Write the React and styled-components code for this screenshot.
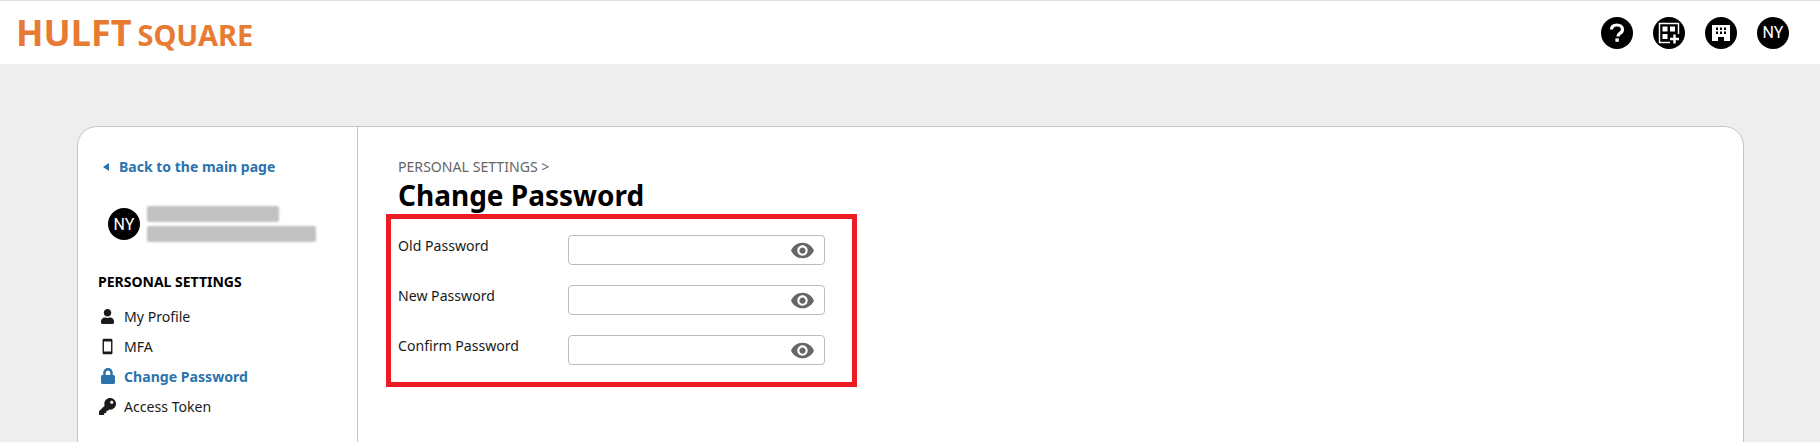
import React from "react";
import styled, { createGlobalStyle } from "styled-components";
import { FaUser, FaLock, FaKey } from "react-icons/fa";
import { MdVisibility, MdSmartphone } from "react-icons/md";

const GlobalStyle = createGlobalStyle`
  html, body {
    margin: 0;
    height: 100%;
    overflow: hidden;
    background: #eeeeee;
    font-family: "Noto Sans", "Open Sans", sans-serif;
  }
`;

const fields = ["Old Password", "New Password", "Confirm Password"];

export default function App() {
  return (
    <Page>
      <GlobalStyle />
      <Header>
        <Logo>
          <LogoMain>HULFT</LogoMain>
          <LogoSub>SQUARE</LogoSub>
        </Logo>
        <HeaderIcons>
          <Circle>
            <svg width="20" height="22" viewBox="0 0 20 22" fill="none">
              <path d="M4.500 7.500C4.500 4.600 6.800 3 10 3s5.500 1.700 5.500 4.400c0 2-1.100 3-2.600 4-1.300.9-1.900 1.500-1.900 3" stroke="#fff" strokeWidth="3.2" />
              <rect x="8.400" y="16.400" width="3.400" height="3.400" fill="#fff" />
            </svg>
          </Circle>
          <Circle>
            <svg width="22" height="22" viewBox="0 0 22 22" fill="none">
              <path d="M12 20.500H1.500v-19h19V12" stroke="#fff" strokeWidth="1.4" />
              <path d="M4.500 4.500h5v5h-5zM12 4.500h5v5h-5zM4.500 12h5v5h-5z" fill="#fff" />
              <path d="M16.500 12.500v9M12 17h9" stroke="#fff" strokeWidth="2.400" />
            </svg>
          </Circle>
          <Circle>
            <svg width="20" height="20" viewBox="0 0 20 20">
              <path
                fillRule="evenodd"
                fill="#fff"
                d="M1 2h18v16h-6v-4H7v4H1zM5 4.500v2.400h2V4.500zM9 4.500v2.400h2V4.500zM13 4.500v2.400h2V4.500zM5 8.500v2.400h2V8.500zM9 8.500v2.400h2V8.500zM13 8.500v2.400h2V8.500z"
              />
            </svg>
          </Circle>
          <Circle>NY</Circle>
        </HeaderIcons>
      </Header>

      <Card>
        <Sidebar>
          <BackLink href="#">
            <BackArrow />
            Back to the main page
          </BackLink>
          <UserRow>
            <Circle>NY</Circle>
            <Blurred>
              <BlurLine $width={132} />
              <BlurLine $width={169} />
            </Blurred>
          </UserRow>
          <SectionTitle>PERSONAL SETTINGS</SectionTitle>
          <NavList>
            <NavItem>
              <NavIcon><FaUser size={15} /></NavIcon>
              My Profile
            </NavItem>
            <NavItem>
              <NavIcon><MdSmartphone size={21} /></NavIcon>
              MFA
            </NavItem>
            <NavItem $active>
              <NavIcon><FaLock size={16} /></NavIcon>
              Change Password
            </NavItem>
            <NavItem>
              <NavIcon><FaKey size={17} /></NavIcon>
              Access Token
            </NavItem>
          </NavList>
        </Sidebar>

        <Content>
          <Crumb>PERSONAL SETTINGS &gt;</Crumb>
          <Title>Change Password</Title>
          <RedBox>
            {fields.map((label) => (
              <FieldRow key={label}>
                <FieldLabel>{label}</FieldLabel>
                <InputBox>
                  <MdVisibility size={25} color="#666666" />
                </InputBox>
              </FieldRow>
            ))}
          </RedBox>
        </Content>
      </Card>
    </Page>
  );
}

const Page = styled.div`
  height: 442px;
  overflow: hidden;
`;
const Header = styled.header`
  display: flex;
  justify-content: space-between;
  align-items: center;
  box-sizing: border-box;
  height: 64px;
  padding: 0 31px 0 16px;
  background: #ffffff;
  border-top: 1px solid #e0e0e0;
`;
const Logo = styled.div`
  display: flex;
  align-items: baseline;
  gap: 6px;
  color: #e87b33;
  font-weight: 700;
  line-height: 1;
`;
const LogoMain = styled.span`
  font-size: 36px;
`;
const LogoSub = styled.span`
  font-size: 29px;
`;
const HeaderIcons = styled.div`
  display: flex;
  gap: 20px;
`;
const Circle = styled.div`
  display: flex;
  align-items: center;
  justify-content: center;
  flex: none;
  width: 32px;
  height: 32px;
  border-radius: 50%;
  background: #000000;
  color: #ffffff;
  font-family: "Roboto", sans-serif;
  font-size: 16px;
`;
const Card = styled.main`
  display: flex;
  box-sizing: border-box;
  height: 460px;
  margin: 62px 76px 0 77px;
  background: #ffffff;
  border: 1px solid #c4c4c4;
  border-radius: 20px;
`;
const Sidebar = styled.aside`
  box-sizing: border-box;
  width: 280px;
  flex: none;
  padding: 30px 0 0 21px;
  border-right: 1px solid #c4c4c4;
`;
const BackLink = styled.a`
  display: flex;
  align-items: center;
  gap: 10px;
  margin-left: 4px;
  height: 19px;
  color: #2a73ad;
  font-size: 14px;
  font-weight: 700;
  text-decoration: none;
`;
const BackArrow = styled.span`
  width: 0;
  height: 0;
  border-style: solid;
  border-width: 4px 6px 4px 0;
  border-color: transparent #2a73ad transparent transparent;
`;
const UserRow = styled.div`
  display: flex;
  align-items: center;
  gap: 7px;
  margin: 30px 0 0 9px;
`;
const Blurred = styled.div`
  display: flex;
  flex-direction: column;
  gap: 4px;
`;
const BlurLine = styled.div`
  width: ${(p) => p.$width}px;
  height: 16px;
  border-radius: 2px;
  background: #c1c1c1;
  filter: blur(1px);
`;
const SectionTitle = styled.h3`
  margin: 30px 0 0 -1px;
  font-size: 14px;
  line-height: 20px;
  font-weight: 700;
  color: #000000;
`;
const NavList = styled.ul`
  list-style: none;
  margin: 9px 0 0;
  padding: 0;
`;
const NavItem = styled.li`
  display: flex;
  align-items: center;
  height: 30px;
  font-size: 14.1px;
  font-weight: ${(p) => (p.$active ? 700 : 400)};
  color: ${(p) => (p.$active ? "#2a73ad" : "#1a1a1a")};
`;
const NavIcon = styled.span`
  display: flex;
  justify-content: center;
  width: 17px;
  margin: 0 8px 0 0;
`;
const Content = styled.section`
  padding: 30px 0 0 40px;
`;
const Crumb = styled.div`
  height: 20px;
  font-size: 14.1px;
  line-height: 20px;
  color: #666666;
`;
const Title = styled.h1`
  margin: 0;
  font-size: 28px;
  line-height: 37px;
  font-weight: 700;
  color: #000000;
`;
const RedBox = styled.div`
  display: flex;
  flex-direction: column;
  gap: 20px;
  box-sizing: border-box;
  width: 471px;
  height: 173px;
  margin: 0 0 0 -12px;
  padding: 16px 7px 0;
  border: 5px solid #ed1c24;
`;
const FieldRow = styled.div`
  display: flex;
  align-items: flex-start;
`;
const FieldLabel = styled.label`
  width: 170px;
  padding-top: 1px;
  font-size: 14.1px;
  line-height: 20px;
  color: #1a1a1a;
`;
const InputBox = styled.div`
  display: flex;
  align-items: center;
  justify-content: flex-end;
  box-sizing: border-box;
  width: 257px;
  height: 30px;
  padding-right: 9px;
  border: 1px solid #bdbdbd;
  border-radius: 4px;
`;
